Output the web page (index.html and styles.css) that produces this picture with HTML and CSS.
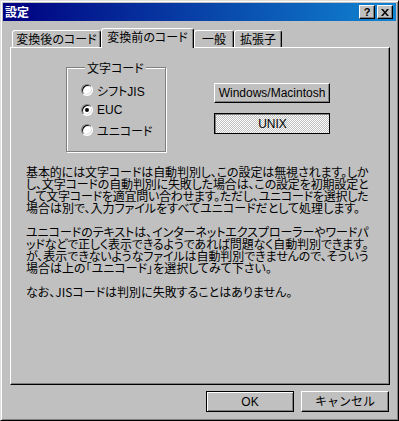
FILE: index.html
```html
<!DOCTYPE html>
<html lang="ja">
<head>
<meta charset="utf-8">
<title>設定</title>
<link rel="stylesheet" href="styles.css">
</head>
<body>
<div class="window">
  <div class="titlebar">
    <span class="title">設定</span>
    <div class="tb-buttons">
      <span class="tb-btn help">?</span>
      <span class="tb-btn close"><svg width="8" height="7" viewBox="0 0 8 7"><path d="M0 0h2l2 2.4L6 0h2L5 3.5 8 7H6L4 4.6 2 7H0l3-3.5z" fill="#000"/></svg></span>
    </div>
  </div>
  <div class="body">
    <div class="tabs">
      <div class="tab t1">変換後のコード</div>
      <div class="tab active t2">変換前のコード</div>
      <div class="tab t3">一般</div>
      <div class="tab t4">拡張子</div>
    </div>
    <div class="panel">
      <div class="top-row">
        <fieldset class="group">
          <legend>文字コード</legend>
          <div class="radio"><span class="circle"></span><span>シフトJIS</span></div>
          <div class="radio"><span class="circle checked"></span><span>EUC</span></div>
          <div class="radio"><span class="circle"></span><span>ユニコード</span></div>
        </fieldset>
        <div class="btn-col">
          <div class="btn wide">Windows/Macintosh</div>
          <div class="btn wide pressed">UNIX</div>
        </div>
      </div>
      <div class="desc">
        <p><span class="full">基本的には文字コードは自動判別し、この設定は無視されます。しか</span><span class="full">し、文字コードの自動判別に失敗した場合は、この設定を初期設定と</span><span class="full">して文字コードを適宜問い合わせます。ただし、ユニコードを選択した</span><span>場合は別で、入力ファイルをすべてユニコードだとして処理します。</span></p>
        <p><span class="full">ユニコードのテキストは、インターネットエクスプローラーやワードパ</span><span class="full">ッドなどで正しく表示できるようであれば問題なく自動判別できます。</span><span class="full">が、表示できないようなファイルは自動判別できませんので、そういう</span><span>場合は上の「ユニコード」を選択してみて下さい。</span></p>
        <p><span>なお、JISコードは判別に失敗することはありません。</span></p>
      </div>
    </div>
    <div class="footer">
      <div class="btn dlg default">OK</div>
      <div class="btn dlg">キャンセル</div>
    </div>
  </div>
</div>
</body>
</html>
```

FILE: styles.css
```css
* { box-sizing: border-box; }
html, body {
  margin: 0;
  background: #c0c0c0;
}
body {
  font: 12px "Liberation Sans", "Noto Sans CJK JP", sans-serif;
  color: #000;
}
.window {
  width: 399px;
  height: 421px;
  background: #c0c0c0;
  border: 1px solid;
  border-color: #dfdfdf #000 #000 #dfdfdf;
  box-shadow: inset 1px 1px #fff, inset -1px -1px #808080;
  padding: 2px;
  display: flex;
  flex-direction: column;
}
.titlebar {
  height: 18px;
  flex: none;
  background: linear-gradient(90deg, #000080, #1084d0);
  display: flex;
  align-items: center;
  justify-content: space-between;
  padding: 0 3px 0 2px;
}
.title {
  color: #fff;
  font-weight: bold;
  font-size: 12px;
  line-height: 14px;
  font-family: "Noto Sans CJK JP", sans-serif;
}
.tb-buttons {
  display: flex;
  gap: 2px;
}
.tb-btn {
  width: 16px;
  height: 14px;
  background: #c0c0c0;
  border: 1px solid;
  border-color: #fff #000 #000 #fff;
  box-shadow: inset -1px -1px #808080;
  display: flex;
  align-items: center;
  justify-content: center;
  font: bold 11px/12px "Liberation Sans", sans-serif;
}
.body {
  flex: 1;
  display: flex;
  flex-direction: column;
  padding: 7px 7px 0;
}
.tabs {
  display: flex;
  align-items: flex-end;
  padding-left: 2px;
  position: relative;
  z-index: 2;
}
.tab {
  height: 17px;
  background: #c0c0c0;
  border-top: 1px solid #fff;
  border-left: 1px solid #fff;
  border-right: 1px solid #000;
  border-radius: 3px 3px 0 0;
  box-shadow: inset -1px 0 #808080;
  text-align: center;
  padding-top: 1px;
  line-height: 14px;
  font-family: "Noto Sans CJK JP", sans-serif;
  font-feature-settings: "palt";
  white-space: nowrap;
}
.tab.active {
  height: 20px;
  margin-bottom: -1px;
}
.t1 { width: 89px; }
.t2 { width: 93px; }
.t3 { width: 40px; }
.t4 { width: 48px; }
.panel {
  height: 338px;
  flex: none;
  width: 380px;
  border: 1px solid;
  border-color: #fff #000 #000 #fff;
  box-shadow: inset -1px -1px #808080;
  padding: 13px 0 0 55px;
  position: relative;
  z-index: 1;
}
.top-row {
  display: flex;
  align-items: flex-start;
}
.group {
  margin: 0;
  width: 100px;
  height: 91px;
  border: 1px solid #808080;
  box-shadow: inset 1px 1px #fff, 1px 1px #fff;
  padding: 6px 0 0 14px;
  font-family: "Noto Sans CJK JP", sans-serif;
  font-feature-settings: "palt";
}
.group legend {
  padding: 0 2px;
  margin-left: 4px;
  line-height: 13px;
  background: #c0c0c0;
  position: relative;
}
.radio {
  height: 20px;
  display: flex;
  align-items: center;
  gap: 4px;
  white-space: nowrap;
  font-family: "Liberation Sans", "Noto Sans CJK JP", sans-serif;
}
.circle {
  width: 12px;
  height: 12px;
  flex: none;
  border-radius: 50%;
  border: 1px solid;
  border-color: #808080 #fff #fff #808080;
  box-shadow: inset 1px 1px #000, inset -1px -1px #dfdfdf;
  background: #fff;
  display: flex;
  align-items: center;
  justify-content: center;
}
.circle.checked::after {
  content: "";
  width: 4px;
  height: 4px;
  border-radius: 50%;
  background: #000;
}
.btn-col {
  margin-left: 48px;
  margin-top: 22px;
  display: flex;
  flex-direction: column;
  gap: 10px;
}
.btn {
  background: #c0c0c0;
  border: 1px solid;
  border-color: #fff #000 #000 #fff;
  box-shadow: inset -1px -1px #808080;
  display: flex;
  align-items: center;
  justify-content: center;
  white-space: nowrap;
  line-height: 14px;
}
.btn.wide {
  width: 116px;
  height: 20px;
}
.btn.pressed {
  height: 21px;
  border-color: #000;
  box-shadow: inset 1px 1px #808080;
  background: repeating-conic-gradient(#fff 0 25%, #c0c0c0 0 50%) 0 0 / 2px 2px;
  padding: 1px 0 0 1px;
}
.desc {
  margin: 14px 0 0 -40px;
  width: 342px;
  font-family: "Noto Sans CJK JP", sans-serif;
  font-feature-settings: "palt";
  line-height: 12px;
  white-space: nowrap;
}
.desc p {
  margin: 0 0 12px;
}
.desc span {
  display: block;
}
.desc span.full {
  letter-spacing: -0.6px;
  text-align: justify;
  text-align-last: justify;
  white-space: normal;
}
.footer {
  display: flex;
  justify-content: flex-end;
  gap: 7px;
  padding-top: 6px;
}
.btn.dlg {
  width: 88px;
  height: 21px;
  font-family: "Liberation Sans", "Noto Sans CJK JP", sans-serif;
}
.btn.default {
  border-color: #000;
  box-shadow: inset 1px 1px #fff, inset -1px -1px #808080;
}
```
